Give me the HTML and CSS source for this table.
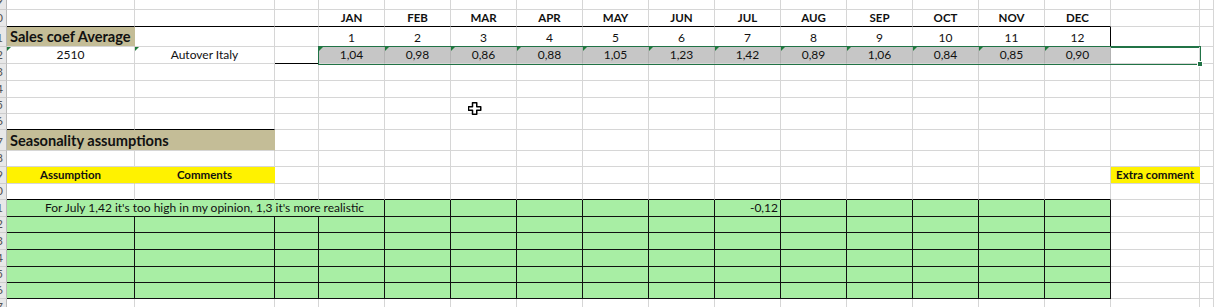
FILE: index.html
```html
<!DOCTYPE html>
<html>
<head>
<meta charset="utf-8">
<link rel="stylesheet" href="styles.css">
</head>
<body>
<div class="sheet">
  <div class="row r10">
    <div class="c h">9</div>
    <div class="c"></div><div class="c"></div><div class="c"></div>
    <div class="c"></div><div class="c"></div><div class="c"></div><div class="c"></div><div class="c"></div><div class="c"></div>
    <div class="c"></div><div class="c"></div><div class="c"></div><div class="c"></div><div class="c"></div><div class="c"></div>
    <div class="c"></div><div class="c"></div>
  </div>
  <div class="row r17">
    <div class="c h">10</div>
    <div class="c bb"></div><div class="c bb"></div><div class="c bb"></div>
    <div class="c bb b">JAN</div><div class="c bb b">FEB</div><div class="c bb b">MAR</div><div class="c bb b">APR</div><div class="c bb b">MAY</div><div class="c bb b">JUN</div>
    <div class="c bb b">JUL</div><div class="c bb b">AUG</div><div class="c bb b">SEP</div><div class="c bb b">OCT</div><div class="c bb b">NOV</div><div class="c bb b">DEC</div>
    <div class="c"></div><div class="c"></div>
  </div>
  <div class="row r20">
    <div class="c h">11</div>
    <div class="c tan title">Sales coef Average</div>
    <div class="c"></div><div class="c"></div>
    <div class="c">1</div><div class="c">2</div><div class="c">3</div><div class="c">4</div><div class="c">5</div><div class="c">6</div>
    <div class="c">7</div><div class="c">8</div><div class="c">9</div><div class="c">10</div><div class="c">11</div><div class="c br">12</div>
    <div class="c"></div><div class="c"></div>
  </div>
  <div class="row r17">
    <div class="c h">12</div>
    <div class="c"><span class="tri"></span>2510</div>
    <div class="c"><span class="tri"></span>Autover Italy</div>
    <div class="c bb"></div>
    <div class="sel">
      <div class="c val"><span class="tri"></span>1,04</div>
      <div class="c val"><span class="tri"></span>0,98</div>
      <div class="c val"><span class="tri"></span>0,86</div>
      <div class="c val"><span class="tri"></span>0,88</div>
      <div class="c val"><span class="tri"></span>1,05</div>
      <div class="c val"><span class="tri"></span>1,23</div>
      <div class="c val"><span class="tri"></span>1,42</div>
      <div class="c val"><span class="tri"></span>0,89</div>
      <div class="c val"><span class="tri"></span>1,06</div>
      <div class="c val"><span class="tri"></span>0,84</div>
      <div class="c val"><span class="tri"></span>0,85</div>
      <div class="c val"><span class="tri"></span>0,90</div>
      <div class="c"></div>
      <span class="handle"></span>
    </div>
    <div class="c"></div>
  </div>
  <div class="row r17">
    <div class="c h">13</div>
    <div class="c"></div><div class="c"></div><div class="c"></div>
    <div class="c"></div><div class="c"></div><div class="c"></div><div class="c"></div><div class="c"></div><div class="c"></div>
    <div class="c"></div><div class="c"></div><div class="c"></div><div class="c"></div><div class="c"></div><div class="c"></div>
    <div class="c"></div><div class="c"></div>
  </div>
  <div class="row r17">
    <div class="c h">14</div>
    <div class="c"></div><div class="c"></div><div class="c"></div>
    <div class="c"></div><div class="c"></div><div class="c"></div><div class="c"></div><div class="c"></div><div class="c"></div>
    <div class="c"></div><div class="c"></div><div class="c"></div><div class="c"></div><div class="c"></div><div class="c"></div>
    <div class="c"></div><div class="c"></div>
  </div>
  <div class="row r16">
    <div class="c h">15</div>
    <div class="c"></div><div class="c"></div><div class="c"></div>
    <div class="c"></div><div class="c"></div><div class="c"></div><div class="c"></div><div class="c"></div><div class="c"></div>
    <div class="c"></div><div class="c"></div><div class="c"></div><div class="c"></div><div class="c"></div><div class="c"></div>
    <div class="c"></div><div class="c"></div>
  </div>
  <div class="row r16">
    <div class="c h">16</div>
    <div class="c bb"></div><div class="c bb"></div><div class="c"></div>
    <div class="c"></div><div class="c"></div><div class="c"></div><div class="c"></div><div class="c"></div><div class="c"></div>
    <div class="c"></div><div class="c"></div><div class="c"></div><div class="c"></div><div class="c"></div><div class="c"></div>
    <div class="c"></div><div class="c"></div>
  </div>
  <div class="row r21">
    <div class="c h">17</div>
    <div class="c tan title span2">Seasonality assumptions</div>
    <div class="c"></div>
    <div class="c"></div><div class="c"></div><div class="c"></div><div class="c"></div><div class="c"></div><div class="c"></div>
    <div class="c"></div><div class="c"></div><div class="c"></div><div class="c"></div><div class="c"></div><div class="c"></div>
    <div class="c"></div><div class="c"></div>
  </div>
  <div class="row r16">
    <div class="c h">18</div>
    <div class="c"></div><div class="c"></div><div class="c"></div>
    <div class="c"></div><div class="c"></div><div class="c"></div><div class="c"></div><div class="c"></div><div class="c"></div>
    <div class="c"></div><div class="c"></div><div class="c"></div><div class="c"></div><div class="c"></div><div class="c"></div>
    <div class="c"></div><div class="c"></div>
  </div>
  <div class="row r17">
    <div class="c h">19</div>
    <div class="c yel b">Assumption</div><div class="c yel b">Comments</div><div class="c"></div>
    <div class="c"></div><div class="c"></div><div class="c"></div><div class="c"></div><div class="c"></div><div class="c"></div>
    <div class="c"></div><div class="c"></div><div class="c"></div><div class="c"></div><div class="c"></div><div class="c"></div>
    <div class="c yel b">Extra comment</div><div class="c"></div>
  </div>
  <div class="row r16">
    <div class="c h">20</div>
    <div class="c bb"></div><div class="c bb"></div><div class="c bb"></div>
    <div class="c bb"></div><div class="c bb"></div><div class="c bb"></div><div class="c bb"></div><div class="c bb"></div><div class="c bb"></div>
    <div class="c bb"></div><div class="c bb"></div><div class="c bb"></div><div class="c bb"></div><div class="c bb"></div><div class="c bb"></div>
    <div class="c"></div><div class="c"></div>
  </div>
  <div class="row r17">
    <div class="c h">21</div>
    <div class="c grn span4 note">For July 1,42 it's too high in my opinion, 1,3 it's more realistic</div>
    <div class="c grn"></div><div class="c grn"></div><div class="c grn"></div><div class="c grn"></div><div class="c grn"></div>
    <div class="c grn num">-0,12</div><div class="c grn"></div><div class="c grn"></div><div class="c grn"></div><div class="c grn"></div><div class="c grn"></div>
    <div class="c"></div><div class="c"></div>
  </div>
  <div class="row r16">
    <div class="c h">22</div>
    <div class="c grn"></div><div class="c grn"></div><div class="c grn"></div>
    <div class="c grn"></div><div class="c grn"></div><div class="c grn"></div><div class="c grn"></div><div class="c grn"></div><div class="c grn"></div>
    <div class="c grn"></div><div class="c grn"></div><div class="c grn"></div><div class="c grn"></div><div class="c grn"></div><div class="c grn"></div>
    <div class="c"></div><div class="c"></div>
  </div>
  <div class="row r17">
    <div class="c h">23</div>
    <div class="c grn"></div><div class="c grn"></div><div class="c grn"></div>
    <div class="c grn"></div><div class="c grn"></div><div class="c grn"></div><div class="c grn"></div><div class="c grn"></div><div class="c grn"></div>
    <div class="c grn"></div><div class="c grn"></div><div class="c grn"></div><div class="c grn"></div><div class="c grn"></div><div class="c grn"></div>
    <div class="c"></div><div class="c"></div>
  </div>
  <div class="row r17">
    <div class="c h">24</div>
    <div class="c grn"></div><div class="c grn"></div><div class="c grn"></div>
    <div class="c grn"></div><div class="c grn"></div><div class="c grn"></div><div class="c grn"></div><div class="c grn"></div><div class="c grn"></div>
    <div class="c grn"></div><div class="c grn"></div><div class="c grn"></div><div class="c grn"></div><div class="c grn"></div><div class="c grn"></div>
    <div class="c"></div><div class="c"></div>
  </div>
  <div class="row r16">
    <div class="c h">25</div>
    <div class="c grn"></div><div class="c grn"></div><div class="c grn"></div>
    <div class="c grn"></div><div class="c grn"></div><div class="c grn"></div><div class="c grn"></div><div class="c grn"></div><div class="c grn"></div>
    <div class="c grn"></div><div class="c grn"></div><div class="c grn"></div><div class="c grn"></div><div class="c grn"></div><div class="c grn"></div>
    <div class="c"></div><div class="c"></div>
  </div>
  <div class="row r16">
    <div class="c h">26</div>
    <div class="c grn"></div><div class="c grn"></div><div class="c grn"></div>
    <div class="c grn"></div><div class="c grn"></div><div class="c grn"></div><div class="c grn"></div><div class="c grn"></div><div class="c grn"></div>
    <div class="c grn"></div><div class="c grn"></div><div class="c grn"></div><div class="c grn"></div><div class="c grn"></div><div class="c grn"></div>
    <div class="c"></div><div class="c"></div>
  </div>
  <div class="row r17">
    <div class="c h">27</div>
    <div class="c"></div><div class="c"></div><div class="c"></div>
    <div class="c"></div><div class="c"></div><div class="c"></div><div class="c"></div><div class="c"></div><div class="c"></div>
    <div class="c"></div><div class="c"></div><div class="c"></div><div class="c"></div><div class="c"></div><div class="c"></div>
    <div class="c"></div><div class="c"></div>
  </div>
  <svg class="cursor" width="14" height="13" viewBox="0 0 14 13"><path d="M4.5 .75h4.25v4h4v3.5h-4v4h-4.25v-4h-4v-3.5h4z" fill="#fff" stroke="#000" stroke-width="1.5" stroke-linejoin="round"/></svg>
</div>
</body>
</html>
```
FILE: styles.css
```css
* { box-sizing: border-box; margin: 0; padding: 0; }
html, body { width: 1214px; height: 307px; overflow: hidden; background: #fff; }
body {
  font-family: Lato, "Open Sans", "DejaVu Sans", sans-serif;
  font-size: 12px;
  color: #111;
}
.sheet { position: relative; display: flex; flex-direction: column; width: 1214px; }
.row {
  display: grid;
  grid-template-columns: 7px 128px 140px 44px repeat(12, 66px) 89px 1fr;
}
.r10 { height: 10px; }
.r16 { height: 16px; }
.r17 { height: 17px; }
.r20 { height: 20px; }
.r21 { height: 21px; }
.c {
  position: relative;
  display: flex;
  align-items: flex-end;
  justify-content: center;
  white-space: nowrap;
  line-height: 12px;
  padding-bottom: 2px;
  border-right: 1px solid #d6d6d6;
  border-bottom: 1px solid #d6d6d6;
  min-width: 0;
}
.h {
  background: #e8e8e8;
  border-right-color: #b9b9b9;
  border-bottom-color: #cdcdcd;
  justify-content: flex-end;
  overflow: hidden;
  padding-right: 3px;
  color: #555;
}
.b { font-weight: 700; font-size: 11.5px; }
.bb { border-bottom-color: #000; }
.br { border-right-color: #000; }
.span2 { grid-column: span 2; }
.span4 { grid-column: span 4; }
.tan { background: #c4bd97; border-right-color: #c4bd97; }
.title {
  justify-content: flex-start;
  padding-left: 3px;
  font-size: 14.6px;
  font-weight: 700;
  line-height: 14px;
  padding-bottom: 2px;
}
.yel { background: #fff200; border-right-color: #fff200; }
.grn { background: #a8eea4; border-right-color: #111; border-bottom-color: #111; }
.note { padding-left: 18px; }
.num { justify-content: flex-end; padding-right: 2px; }
.sel {
  grid-column: span 13;
  position: relative;
  z-index: 2;
  display: grid;
  grid-template-columns: repeat(12, 66px) 89px;
  outline: 2px solid #217346;
  outline-offset: -1px;
}
.val { background: #c6c6c6; border-right-color: #b3b3b3; }
.tri {
  position: absolute;
  top: 0;
  left: 0;
  width: 0;
  height: 0;
  border-top: 4px solid #1e7b3b;
  border-right: 4px solid transparent;
}
.handle {
  position: absolute;
  right: -3px;
  bottom: -3px;
  width: 6px;
  height: 6px;
  background: #217346;
  border: 1px solid #fff;
}
.cursor { position: absolute; left: 468px; top: 102px; }
```
